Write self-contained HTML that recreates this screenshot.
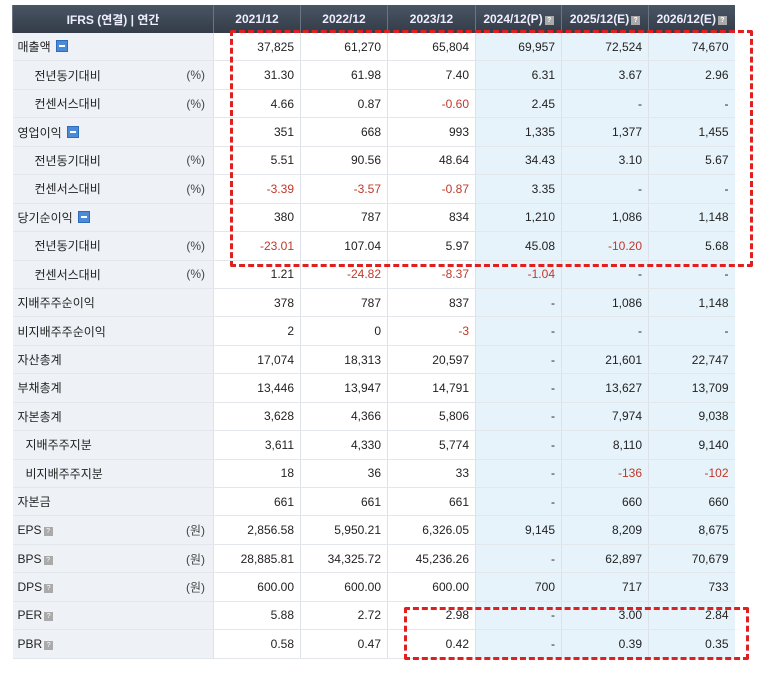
<!DOCTYPE html>
<html><head><meta charset="utf-8"><style>
body{margin:0;background:#fff;width:773px;height:674px;overflow:hidden;position:relative;font-family:"Liberation Sans","Noto Sans CJK KR",sans-serif;font-size:12px;color:#222}
table{position:absolute;left:12px;top:5px;border-collapse:collapse;table-layout:fixed;width:722px}
th{height:28px;background:linear-gradient(#4a5563,#333c48);color:#eef;font-weight:bold;font-size:12px;border-left:1px solid #6a7482;padding:0}
td{height:27.45px;padding:0 6px 0 0;text-align:right;border-bottom:1px solid #e3e7ec;border-left:1px solid #dde2e8;white-space:nowrap}
td.l{text-align:left;background:#eef2f7;padding-left:5px;border-left:none;position:relative}
td.f{background:#e6f3fa}
.u{position:absolute;right:8px;top:50%;transform:translateY(-50%);color:#444}
.s1{padding-left:22px!important}.s2{padding-left:13px!important}
.r{color:#c0392b}
.m{display:inline-block;width:10px;height:10px;background:#4a8ad8;border:1px solid #2f6cb8;vertical-align:-1px;margin-left:5px;position:relative}
.m:after{content:"";position:absolute;left:2px;right:2px;top:4px;height:2px;background:#fff}
.q{display:inline-block;width:9px;height:9px;background:#aaa;color:#fff;font-size:7px;line-height:9px;text-align:center;margin-left:2px;vertical-align:1px}
.box{position:absolute;border:3px dashed #e0201f;border-radius:2px}
</style></head><body>
<table>
<colgroup><col style="width:201px"><col style="width:87px"><col style="width:87px"><col style="width:88px"><col style="width:86px"><col style="width:87px"><col style="width:86px"></colgroup>
<tr><th>IFRS (연결) | 연간</th><th>2021/12</th><th>2022/12</th><th>2023/12</th><th>2024/12(P)<span class="q">?</span></th><th>2025/12(E)<span class="q">?</span></th><th>2026/12(E)<span class="q">?</span></th></tr>
<tr><td class="l">매출액<span class="m"></span></td><td>37,825</td><td>61,270</td><td>65,804</td><td class="f">69,957</td><td class="f">72,524</td><td class="f">74,670</td></tr>
<tr><td class="l s1">전년동기대비<span class="u">(%)</span></td><td>31.30</td><td>61.98</td><td>7.40</td><td class="f">6.31</td><td class="f">3.67</td><td class="f">2.96</td></tr>
<tr><td class="l s1">컨센서스대비<span class="u">(%)</span></td><td>4.66</td><td>0.87</td><td class="r">-0.60</td><td class="f">2.45</td><td class="f">-</td><td class="f">-</td></tr>
<tr><td class="l">영업이익<span class="m"></span></td><td>351</td><td>668</td><td>993</td><td class="f">1,335</td><td class="f">1,377</td><td class="f">1,455</td></tr>
<tr><td class="l s1">전년동기대비<span class="u">(%)</span></td><td>5.51</td><td>90.56</td><td>48.64</td><td class="f">34.43</td><td class="f">3.10</td><td class="f">5.67</td></tr>
<tr><td class="l s1">컨센서스대비<span class="u">(%)</span></td><td class="r">-3.39</td><td class="r">-3.57</td><td class="r">-0.87</td><td class="f">3.35</td><td class="f">-</td><td class="f">-</td></tr>
<tr><td class="l">당기순이익<span class="m"></span></td><td>380</td><td>787</td><td>834</td><td class="f">1,210</td><td class="f">1,086</td><td class="f">1,148</td></tr>
<tr><td class="l s1">전년동기대비<span class="u">(%)</span></td><td class="r">-23.01</td><td>107.04</td><td>5.97</td><td class="f">45.08</td><td class="f r">-10.20</td><td class="f">5.68</td></tr>
<tr><td class="l s1">컨센서스대비<span class="u">(%)</span></td><td>1.21</td><td class="r">-24.82</td><td class="r">-8.37</td><td class="f r">-1.04</td><td class="f">-</td><td class="f">-</td></tr>
<tr><td class="l">지배주주순이익</td><td>378</td><td>787</td><td>837</td><td class="f">-</td><td class="f">1,086</td><td class="f">1,148</td></tr>
<tr><td class="l">비지배주주순이익</td><td>2</td><td>0</td><td class="r">-3</td><td class="f">-</td><td class="f">-</td><td class="f">-</td></tr>
<tr><td class="l">자산총계</td><td>17,074</td><td>18,313</td><td>20,597</td><td class="f">-</td><td class="f">21,601</td><td class="f">22,747</td></tr>
<tr><td class="l">부채총계</td><td>13,446</td><td>13,947</td><td>14,791</td><td class="f">-</td><td class="f">13,627</td><td class="f">13,709</td></tr>
<tr><td class="l">자본총계</td><td>3,628</td><td>4,366</td><td>5,806</td><td class="f">-</td><td class="f">7,974</td><td class="f">9,038</td></tr>
<tr><td class="l s2">지배주주지분</td><td>3,611</td><td>4,330</td><td>5,774</td><td class="f">-</td><td class="f">8,110</td><td class="f">9,140</td></tr>
<tr><td class="l s2">비지배주주지분</td><td>18</td><td>36</td><td>33</td><td class="f">-</td><td class="f r">-136</td><td class="f r">-102</td></tr>
<tr><td class="l">자본금</td><td>661</td><td>661</td><td>661</td><td class="f">-</td><td class="f">660</td><td class="f">660</td></tr>
<tr><td class="l">EPS<span class="q">?</span><span class="u">(원)</span></td><td>2,856.58</td><td>5,950.21</td><td>6,326.05</td><td class="f">9,145</td><td class="f">8,209</td><td class="f">8,675</td></tr>
<tr><td class="l">BPS<span class="q">?</span><span class="u">(원)</span></td><td>28,885.81</td><td>34,325.72</td><td>45,236.26</td><td class="f">-</td><td class="f">62,897</td><td class="f">70,679</td></tr>
<tr><td class="l">DPS<span class="q">?</span><span class="u">(원)</span></td><td>600.00</td><td>600.00</td><td>600.00</td><td class="f">700</td><td class="f">717</td><td class="f">733</td></tr>
<tr><td class="l">PER<span class="q">?</span></td><td>5.88</td><td>2.72</td><td>2.98</td><td class="f">-</td><td class="f">3.00</td><td class="f">2.84</td></tr>
<tr><td class="l">PBR<span class="q">?</span></td><td>0.58</td><td>0.47</td><td>0.42</td><td class="f">-</td><td class="f">0.39</td><td class="f">0.35</td></tr>
</table>
<div class="box" style="left:230px;top:30px;width:517px;height:231px"></div>
<div class="box" style="left:404px;top:607px;width:339px;height:47px"></div>
</body></html>
